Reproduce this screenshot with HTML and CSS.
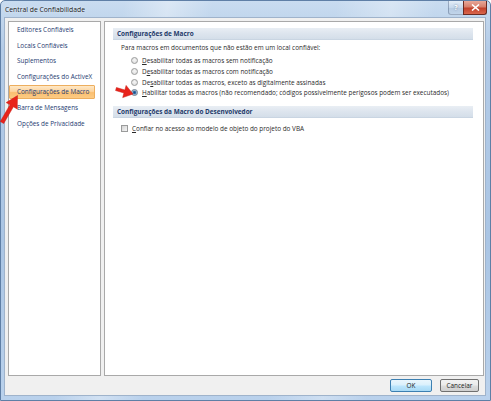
FILE: index.html
```html
<!DOCTYPE html>
<html lang="pt-BR">
<head>
<meta charset="utf-8">
<title>Central de Confiabilidade</title>
<link rel="stylesheet" href="styles.css">
</head>
<body>
<div class="window">
  <div class="titlebar">
    <span class="title">Central de Confiabilidade</span>
    <div class="caption-btns">
      <span class="cap-help">?</span>
      <span class="cap-close"><svg width="9" height="7" viewBox="0 0 9 7"><path d="M1 0.5 L8 6.5 M8 0.5 L1 6.5" stroke="#fff" stroke-width="1.6"/></svg></span>
    </div>
  </div>
  <div class="client">
    <div class="panes">
      <ul class="nav">
        <li class="nav-item">Editores Confiáveis</li>
        <li class="nav-item">Locais Confiáveis</li>
        <li class="nav-item">Suplementos</li>
        <li class="nav-item">Configurações do ActiveX</li>
        <li class="nav-item active">Configurações de Macro</li>
        <li class="nav-item">Barra de Mensagens</li>
        <li class="nav-item">Opções de Privacidade</li>
      </ul>
      <div class="content">
        <div class="sec-head">Configurações de Macro</div>
        <p class="intro">Para macros em documentos que não estão em um local confiável:</p>
        <ul class="radios">
          <li class="opt"><span class="radio"></span><span><u>D</u>esabilitar todas as macros sem notificação</span></li>
          <li class="opt"><span class="radio"></span><span>D<u>e</u>sabilitar todas as macros com notificação</span></li>
          <li class="opt"><span class="radio"></span><span>De<u>s</u>abilitar todas as macros, exceto as digitalmente assinadas</span></li>
          <li class="opt"><span class="radio checked"></span><span><u>H</u>abilitar todas as macros (não recomendado; códigos possivelmente perigosos podem ser executados)</span></li>
        </ul>
        <div class="sec-head sec-2">Configurações da Macro do Desenvolvedor</div>
        <div class="check-row"><span class="checkbox"></span><span><u>C</u>onfiar no acesso ao modelo de objeto do projeto do VBA</span></div>
      </div>
    </div>
    <div class="buttons">
      <button class="btn btn-default">OK</button>
      <button class="btn btn-cancel">Cancelar</button>
    </div>
  </div>
  <svg class="annot" width="491" height="401" viewBox="0 0 491 401">
    <polygon points="17.5,95.5 17.2,109 13.4,106.8 3.7,123.5 0.3,121.5 10,104.8 6.2,102.6" fill="#e8231b" stroke="#c81810" stroke-width="0.5"/>
    <polygon points="133,94 122.7,97.6 123.95,93 115.55,90.5 116.45,87.5 124.85,90 126.1,85.4" fill="#e8231b" stroke="#c81810" stroke-width="0.5"/>
  </svg>
</div>
</body>
</html>
```

FILE: styles.css
```css
* { box-sizing: border-box; }
html, body { margin: 0; padding: 0; }
body {
  width: 491px;
  height: 401px;
  overflow: hidden;
  font-family: "Open Sans", "Liberation Sans", sans-serif;
  font-size: 6.4px;
  background: #ffffff;
}
.window {
  position: relative;
  width: 491px;
  height: 401px;
  display: flex;
  flex-direction: column;
  border: 1px solid #5f7fa6;
  border-radius: 5px 5px 0 0;
  background:
    linear-gradient(100deg, rgba(255,255,255,0) 0%, rgba(255,255,255,0) 22%, rgba(255,255,255,0.35) 30%, rgba(255,255,255,0) 38%, rgba(255,255,255,0) 60%, rgba(255,255,255,0.3) 70%, rgba(255,255,255,0) 78%),
    linear-gradient(180deg, #c9dcf0 0%, #b3cbe7 12%, #aac5e4 60%, #b9d1ec 100%);
}
.titlebar {
  height: 16px;
  display: flex;
  align-items: center;
  justify-content: space-between;
  padding-left: 4px;
  padding-right: 3px;
}
.title {
  font-size: 6.8px;
  color: #1a1a1a;
  text-shadow: 0 0 3px rgba(255,255,255,0.9);
}
.caption-btns {
  display: flex;
  align-self: flex-start;
  height: 14px;
}
.cap-help {
  width: 15px;
  height: 14px;
  display: flex;
  align-items: center;
  justify-content: center;
  font-size: 7px;
  font-weight: bold;
  color: #ffffff;
  text-shadow: 0 0 2px #5b6f88;
  background: linear-gradient(180deg, rgba(255,255,255,0.5), rgba(200,215,232,0.35) 50%, rgba(160,180,205,0.4) 51%, rgba(190,210,230,0.45));
  border: 1px solid rgba(90,110,140,0.5);
  border-right: none;
  border-top: none;
  border-radius: 0 0 0 3px;
}
.cap-close {
  width: 24px;
  height: 14px;
  display: flex;
  align-items: center;
  justify-content: center;
  background: linear-gradient(180deg, #e8a899 0%, #d77f6c 45%, #c2412c 55%, #d9664c 100%);
  border: 1px solid #6a2a22;
  border-top: none;
  border-radius: 0 0 3px 0;
}
.client {
  margin: 0 4px 4px 3px;
  flex: 1;
  display: flex;
  flex-direction: column;
  background: #f0f0f0;
  border: 1px solid #9fb3cb;
  padding: 3px 1px 3px 3px;
}
.panes {
  display: flex;
  gap: 3px;
  height: 355px;
}
.nav {
  list-style: none;
  margin: 0;
  padding: 1px 0 0 0;
  width: 93px;
  height: 100%;
  background: #ffffff;
  border: 1px solid #a9a9a9;
}
.nav-item {
  height: 14px;
  line-height: 12px;
  margin: 0 5px 1.6px 0;
  padding-left: 7px;
  color: #1e3a70;
  white-space: nowrap;
  border: 1px solid transparent;
  border-radius: 1px;
}
.nav-item.active {
  background: linear-gradient(180deg, #fee8c6 0%, #fdd49e 45%, #fbbf70 55%, #fccb84 100%);
  border-color: #edae5e;
}
.content {
  flex: 1;
  height: 100%;
  background: #ffffff;
  border: 1px solid #a9a9a9;
  padding: 6px 10px 0 8px;
}
.sec-head {
  height: 12px;
  line-height: 12px;
  padding-left: 4px;
  font-weight: bold;
  color: #1e3a6a;
  background: linear-gradient(180deg, #e9eef4 0%, #dde5ee 50%, #d4dee9 100%);
  border-bottom: 1px solid #c9d5e2;
}
.sec-2 { margin-top: 8px; }
.intro {
  margin: 3px 0 0 0;
  padding-left: 8px;
  line-height: 10.7px;
  color: #2a2a2a;
}
.radios {
  list-style: none;
  margin: 1.6px 0 0 0;
  padding: 0 0 0 18px;
}
.opt {
  display: flex;
  align-items: center;
  height: 10.7px;
  color: #2a2a2a;
  white-space: nowrap;
}
.radio {
  width: 7px;
  height: 7px;
  margin-right: 4px;
  border-radius: 50%;
  border: 1px solid #9a9b9b;
  background: radial-gradient(circle at 50% 40%, #f6f6f6 0%, #e2e2e2 70%, #d6d6d6 100%);
  flex: none;
}
.radio.checked {
  background: radial-gradient(circle at 50% 50%, #1d4e82 0%, #2f6aa5 35%, #9fb9d3 60%, #e6e6e6 100%);
  border-color: #6f7f90;
}
.check-row {
  display: flex;
  align-items: center;
  height: 10.7px;
  margin-top: 5px;
  padding-left: 8px;
  color: #2a2a2a;
  white-space: nowrap;
}
.checkbox {
  width: 7px;
  height: 7px;
  margin-right: 4px;
  border: 1px solid #9a9b9b;
  background: linear-gradient(135deg, #d2d2d2 0%, #e8e8e8 60%, #f5f5f5 100%);
  flex: none;
}
.buttons {
  margin-top: 3px;
  height: 13px;
  display: flex;
  justify-content: flex-end;
  gap: 8px;
  padding-right: 5px;
}
.btn {
  height: 13px;
  padding: 0;
  font-family: inherit;
  font-size: 6.4px;
  color: #1a1a1a;
  border: 1px solid #707070;
  border-radius: 2px;
  background: linear-gradient(180deg, #f2f2f2 0%, #ebebeb 48%, #dddddd 52%, #cfcfcf 100%);
}
.btn-default {
  width: 42px;
  border-color: #3c7fb1;
  background: linear-gradient(180deg, #eaf6fd 0%, #d9f0fc 48%, #bee6fd 52%, #a7d9f5 100%);
}
.btn-cancel { width: 39px; }
.annot {
  position: absolute;
  left: -1px;
  top: -1px;
  pointer-events: none;
}
```
